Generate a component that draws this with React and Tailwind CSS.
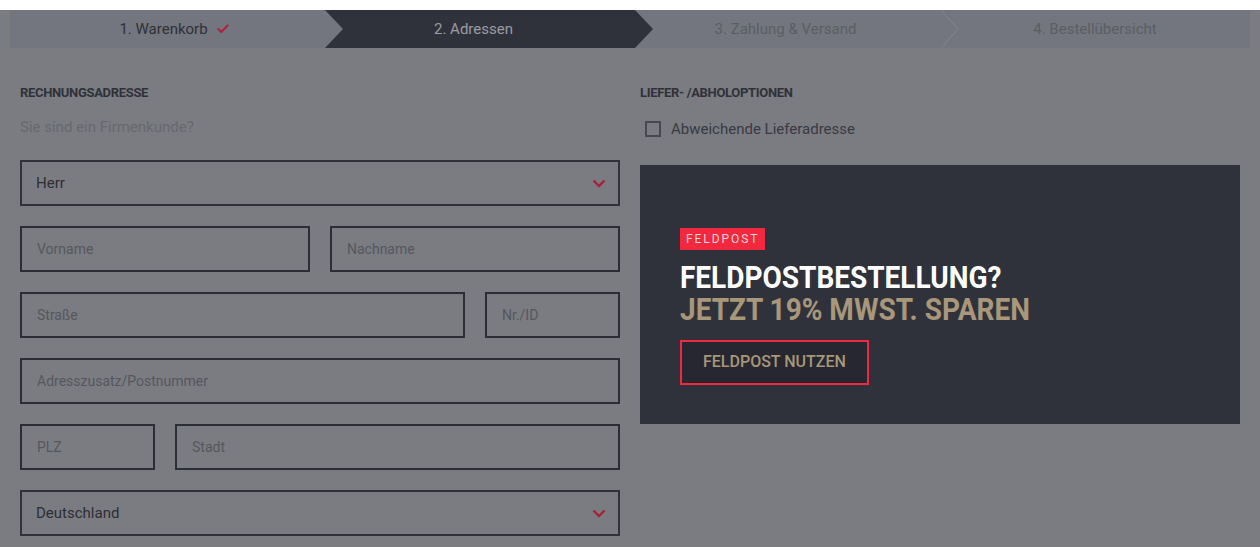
import { Check } from 'lucide-react'

const font = { fontFamily: 'Roboto, "Liberation Sans", sans-serif' }

const Chevron = () => (
  <svg width="14" height="9" viewBox="0 0 14 9" className="shrink-0">
    <path d="M1.5 1.5 L7 7 L12.5 1.5" fill="none" stroke="#a3233b" strokeWidth="2.4" />
  </svg>
)

const SelectBox = ({ value }) => (
  <div className="flex h-[46px] items-center justify-between border-2 border-[#30323a] pl-[14px] pr-[12px]">
    <span className="text-[15px] text-[#2c2e35]">{value}</span>
    <Chevron />
  </div>
)

const Field = ({ placeholder, className = '' }) => (
  <div className={`flex h-[46px] items-center border-2 border-[#2c2e35] px-[15px] ${className}`}>
    <span className="text-[14px] text-[#55575e]">{placeholder}</span>
  </div>
)

const Steps = () => (
  <div className="mx-[10px] mt-[10px] flex h-[38px] bg-[#73767e] text-[15px]">
    <div className="flex w-[315px] items-center justify-center gap-2 pl-[14px] text-[#2f3139]">
      <span>1. Warenkorb</span>
      <Check size={14} strokeWidth={3.5} className="text-[#b0213a]" />
    </div>

    <div className="relative flex w-[310px] items-center justify-center pr-[13px]">
      <div className="absolute inset-y-0 left-0 -right-[18px] bg-[#30323b] [clip-path:polygon(0_0,calc(100%-18px)_0,100%_50%,calc(100%-18px)_100%,0_100%,18px_50%)]" />
      <span className="relative text-[#9a9ca3]">2. Adressen</span>
    </div>

    <div className="flex w-[305px] items-center justify-center pr-[4px] text-[#5b5e66]">
      3. Zahlung &amp; Versand
    </div>

    <div className="relative flex flex-1 items-center justify-center text-[#5b5e66]">
      <svg width="20" height="38" viewBox="0 0 20 38" className="absolute left-[1px] top-0">
        <path d="M0 0 L17 19 L0 38" fill="none" stroke="#7c7f87" strokeWidth="1.5" />
      </svg>
      4. Bestellübersicht
    </div>
  </div>
)

export default function App() {
  return (
    <div className="min-h-[547px] w-full bg-[#7b7c81]" style={font}>
      <Steps />

      <div className="mx-[20px] mt-[35px] flex gap-[20px]">
        <div className="flex w-[600px] flex-col">
          <h2 className="text-[13px] font-bold uppercase leading-5 tracking-tight text-[#2f3139]">
            Rechnungsadresse
          </h2>

          <p className="mt-[14px] text-[15px] leading-5 text-[#67696f]">
            Sie sind ein Firmenkunde?
          </p>

          <div className="mt-[23px] flex flex-col gap-[20px]">
            <SelectBox value="Herr" />

            <div className="flex gap-[20px]">
              <Field placeholder="Vorname" className="flex-1" />
              <Field placeholder="Nachname" className="flex-1" />
            </div>

            <div className="flex gap-[20px]">
              <Field placeholder="Straße" className="flex-1" />
              <Field placeholder="Nr./ID" className="w-[135px]" />
            </div>

            <Field placeholder="Adresszusatz/Postnummer" />

            <div className="flex gap-[20px]">
              <Field placeholder="PLZ" className="w-[135px]" />
              <Field placeholder="Stadt" className="flex-1" />
            </div>

            <SelectBox value="Deutschland" />
          </div>
        </div>

        <div className="flex w-[600px] flex-col">
          <h2 className="text-[13px] font-bold uppercase leading-5 tracking-tight text-[#2f3139]">
            Liefer- /Abholoptionen
          </h2>

          <label className="mt-[15px] flex items-center gap-[10px] pl-[5px]">
            <span className="h-[16px] w-[16px] border-2 border-[#464953]" />
            <span className="text-[15px] text-[#383a42]">
              Abweichende Lieferadresse
            </span>
          </label>

          <div className="mt-[24px] flex h-[259px] flex-col items-start bg-[#30323b] pl-[40px] pt-[63px]">
            <span className="bg-[#f2283f] px-[6px] py-[3px] text-[12px] leading-4 tracking-[0.16em] text-[#f4d5da]">
              FELDPOST
            </span>

            <div className="mt-[11px] origin-left scale-x-[0.875] text-[32px] font-bold uppercase leading-[32px]">
              <p className="whitespace-nowrap text-white">Feldpostbestellung?</p>
              <p className="whitespace-nowrap text-[#a8977a]">Jetzt 19% MwSt. sparen</p>
            </div>

            <button className="mt-[15px] h-[45px] border-2 border-[#f2283f] bg-[#262730] px-[21px] text-[16px] font-medium uppercase text-[#a8977a]">
              Feldpost nutzen
            </button>
          </div>
        </div>
      </div>
    </div>
  )
}
